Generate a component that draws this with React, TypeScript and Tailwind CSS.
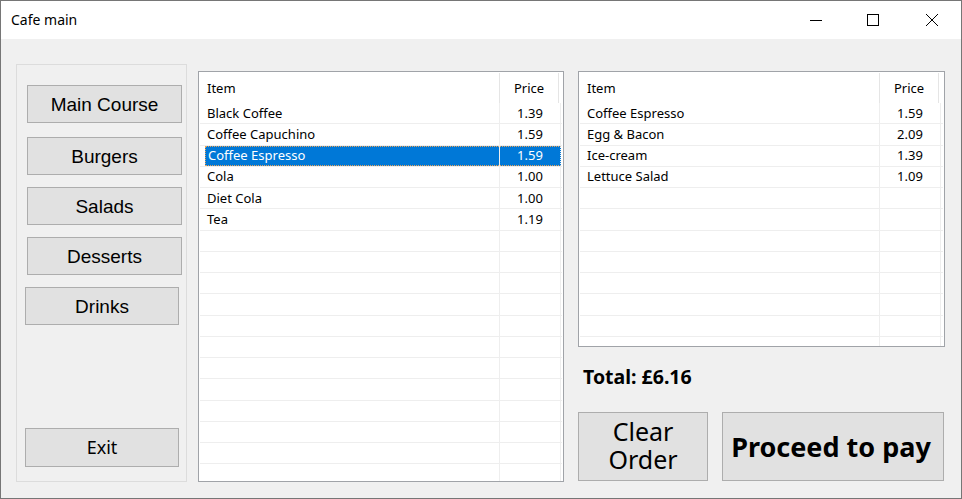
import React from "react";

const leftItems: [string, string][] = [
  ["Black Coffee", "1.39"],
  ["Coffee Capuchino", "1.59"],
  ["Coffee Espresso", "1.59"],
  ["Cola", "1.00"],
  ["Diet Cola", "1.00"],
  ["Tea", "1.19"],
];

const rightItems: [string, string][] = [
  ["Coffee Espresso", "1.59"],
  ["Egg & Bacon", "2.09"],
  ["Ice-cream", "1.39"],
  ["Lettuce Salad", "1.09"],
];

function ListView({
  items,
  rows,
  selected,
  className,
}: {
  items: [string, string][];
  rows: number;
  selected?: number;
  className: string;
}) {
  return (
    <div
      className={`border border-[#a0a3a8] bg-white p-px overflow-hidden text-[13px] text-black font-['Noto_Sans',sans-serif] ${className}`}
    >
      <div className="flex h-[30px]">
        <div className="w-[300px] border-r border-[#e5e5e5] flex items-center pl-[7px] leading-none">
          Item
        </div>
        <div className="w-[59px] border-r border-[#e5e5e5] flex items-center justify-center leading-none">
          Price
        </div>
      </div>
      {Array.from({ length: rows }).map((_, i) => {
        const it = items[i];
        const sel = i === selected;
        return (
          <div key={i} className="flex h-[21.25px] border-b border-[#eeeeee]">
            <div className="w-[300px] border-r border-[#eeeeee] flex items-stretch">
              {sel ? (
                <div className="ml-[5px] flex-1 bg-[#0078d7] text-white flex items-center pl-[2px] leading-none border border-dotted border-[#e7a35a] border-r-0">
                  {it?.[0]}
                </div>
              ) : (
                <div className="flex-1 flex items-center pl-[7px] leading-none">{it?.[0]}</div>
              )}
            </div>
            <div
              className={`w-[61px] border-r border-[#eeeeee] flex items-center justify-center leading-none ${
                sel ? "bg-[#0078d7] text-white border-y border-dotted border-y-[#e7a35a]" : ""
              }`}
            >
              {it?.[1]}
            </div>
          </div>
        );
      })}
    </div>
  );
}

function MenuButton({ label, className = "" }: { label: string; className?: string }) {
  return (
    <div
      className={`h-[38px] bg-[#e1e1e1] border border-[#adadad] flex items-center justify-center pt-[1px] text-[19px] text-black leading-none font-['Liberation_Sans',Arial,sans-serif] ${className}`}
    >
      {label}
    </div>
  );
}

export default function App() {
  return (
    <div className="w-[962px] h-[499px] border border-[#767676] flex flex-col overflow-hidden bg-[#f0f0f0] font-['Noto_Sans',sans-serif]">
      {/* Title bar */}
      <div className="h-[38px] bg-white flex items-center shrink-0">
        <div className="pl-[10px] text-[14px] text-black leading-none pb-[1px]">Cafe main</div>
        <div className="ml-auto flex items-center h-full pr-[12px]">
          <svg width="56" height="38" viewBox="0 0 56 38">
            <line x1="0" y1="19.5" x2="12" y2="19.5" stroke="#000" strokeWidth="1" />
          </svg>
          <svg width="59" height="38" viewBox="0 0 59 38">
            <rect x="1.5" y="13.5" width="11" height="11" fill="none" stroke="#000" strokeWidth="1" />
          </svg>
          <svg width="24" height="38" viewBox="0 0 24 38">
            <line x1="1" y1="13" x2="13" y2="25" stroke="#000" strokeWidth="1" />
            <line x1="13" y1="13" x2="1" y2="25" stroke="#000" strokeWidth="1" />
          </svg>
        </div>
      </div>

      {/* Content */}
      <div className="flex-1 flex pt-[25px] pl-[15px]">
        {/* Group box */}
        <div className="w-[171px] h-[418px] border border-[#dcdcdc] flex flex-col pt-[20px] pl-[10px]">
          <MenuButton label="Main Course" className="w-[155px]" />
          <MenuButton label="Burgers" className="w-[155px] mt-[14px]" />
          <MenuButton label="Salads" className="w-[155px] mt-[12px]" />
          <MenuButton label="Desserts" className="w-[155px] mt-[12px]" />
          <MenuButton label="Drinks" className="w-[154px] mt-[12px] -ml-[2px]" />
          <div className="mt-auto mb-[14px] -ml-[2px] w-[154px] h-[39px] bg-[#e1e1e1] border border-[#adadad] flex items-center justify-center pb-[1px] text-[18px] text-black leading-none">
            Exit
          </div>
        </div>

        {/* Left list */}
        <ListView
          items={leftItems}
          rows={18}
          selected={2}
          className="ml-[11px] mt-[7px] w-[366px] h-[411px]"
        />

        {/* Right column */}
        <div className="ml-[14px] mt-[7px] w-[367px] flex flex-col">
          <ListView items={rightItems} rows={12} className="w-[367px] h-[276px]" />
          <div className="mt-[20px] pl-[5px] h-[19px] text-[19.5px] leading-[19px] font-bold text-black">
            Total: £6.16
          </div>
          <div className="mt-[26px] flex">
            <div className="w-[130px] h-[69px] bg-[#e1e1e1] border border-[#adadad] flex flex-col items-center justify-center pb-[4px] text-[25px] text-black">
              <span className="block h-[28px] leading-[28px]">Clear</span>
              <span className="block h-[28px] leading-[28px]">Order</span>
            </div>
            <div className="ml-[14px] w-[222px] h-[69px] bg-[#e1e1e1] border border-[#adadad] flex items-center justify-center pr-[4px] text-[27px] leading-none font-bold text-black">
              Proceed to pay
            </div>
          </div>
        </div>
      </div>
    </div>
  );
}
